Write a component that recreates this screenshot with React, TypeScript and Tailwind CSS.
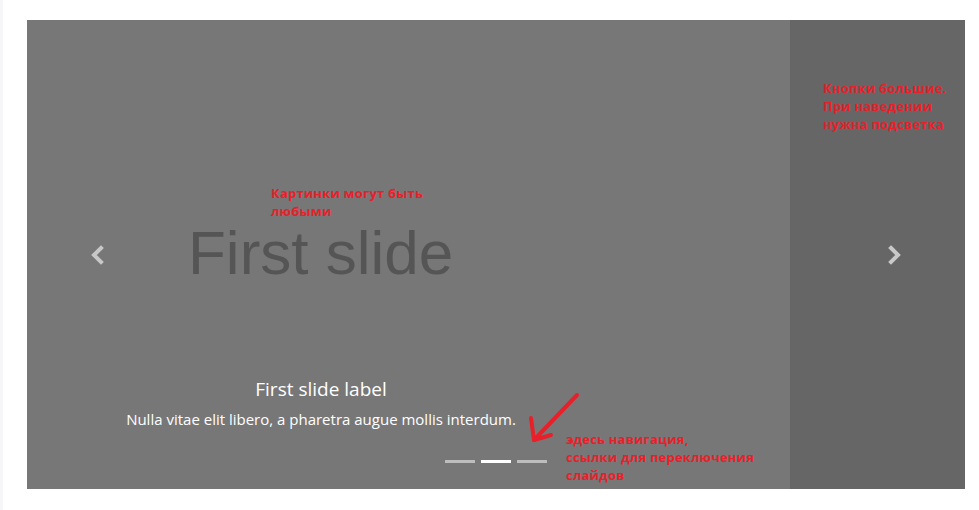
import React from 'react';

const note = "absolute font-['Open_Sans',sans-serif] font-bold text-[13px] leading-[18px] text-[#e8202a] tracking-[0.2px]";

function Chevron({ dir }: { dir: 'left' | 'right' }) {
  const points = dir === 'left' ? '11,3 4,10 11,17' : '4,3 11,10 4,17';
  return (
    <svg width="15" height="20" viewBox="0 0 15 20">
      <polyline points={points} fill="none" stroke="#c8c8c8" strokeWidth="4" strokeLinejoin="miter" strokeLinecap="square" />
    </svg>
  );
}

export default function App() {
  const slides = [false, true, false];

  return (
    <div className="flex w-[979px] h-[510px] bg-white">
      <div className="w-[3px] h-full bg-[#f6f6f9]" />
      <div className="ml-[24px] mt-[20px]">
        <div className="relative flex w-[938px] h-[469px] bg-[#777777] overflow-hidden">
          {/* slide */}
          <div className="flex-1 flex flex-col pt-[202px]">
            <div className="flex items-center h-[62px]">
              <button className="ml-[63px] mt-[4px] flex">
                <Chevron dir="left" />
              </button>
              <div className="ml-[83px] font-['Liberation_Sans',Arial,sans-serif] text-[62px] leading-[62px] text-[#555555]">
                First slide
              </div>
            </div>

            <div className="mt-[91px] ml-[60px] w-[468px] text-center text-white font-['Open_Sans',sans-serif]">
              <h3 className="text-[19px] leading-[28px]">First slide label</h3>
              <p className="mt-[5px] text-[15px] leading-[22px]">Nulla vitae elit libero, a pharetra augue mollis interdum.</p>
            </div>

            <div className="mt-[30px] ml-[418px] flex gap-[6px]">
              {slides.map((active, i) => (
                <span key={i} className={active ? 'w-[30px] h-[3px] bg-white' : 'w-[30px] h-[3px] bg-[#bdbdbd]'} />
              ))}
            </div>
          </div>

          {/* next control */}
          <button className="w-[175px] h-full bg-[#666666] flex items-center pl-[97px] pt-[1px]">
            <Chevron dir="right" />
          </button>

          {/* annotations drawn over the screenshot */}
          <div className={note + ' left-[244px] top-[164px]'}>
            Картинки могут быть
            <br />
            любыми
          </div>
          <div className={note + ' left-[796px] top-[59px]'}>
            Кнопки большие.
            <br />
            При наведении
            <br />
            нужна подсветка
          </div>
          <div className={note + ' left-[539px] top-[410px]'}>
            здесь навигация,
            <br />
            ссылки для переключения
            <br />
            слайдов
          </div>
          <svg className="absolute left-[495px] top-[370px]" width="60" height="60" viewBox="0 0 60 60">
            <g fill="none" stroke="#e8202a" strokeWidth="4" strokeLinecap="round" strokeLinejoin="round">
              <path d="M55 5 L12 50" />
              <path d="M9 28 L12 50 L29 45" />
            </g>
            <circle cx="49" cy="51" r="2" fill="#e8202a" />
          </svg>
        </div>
      </div>
    </div>
  );
}
